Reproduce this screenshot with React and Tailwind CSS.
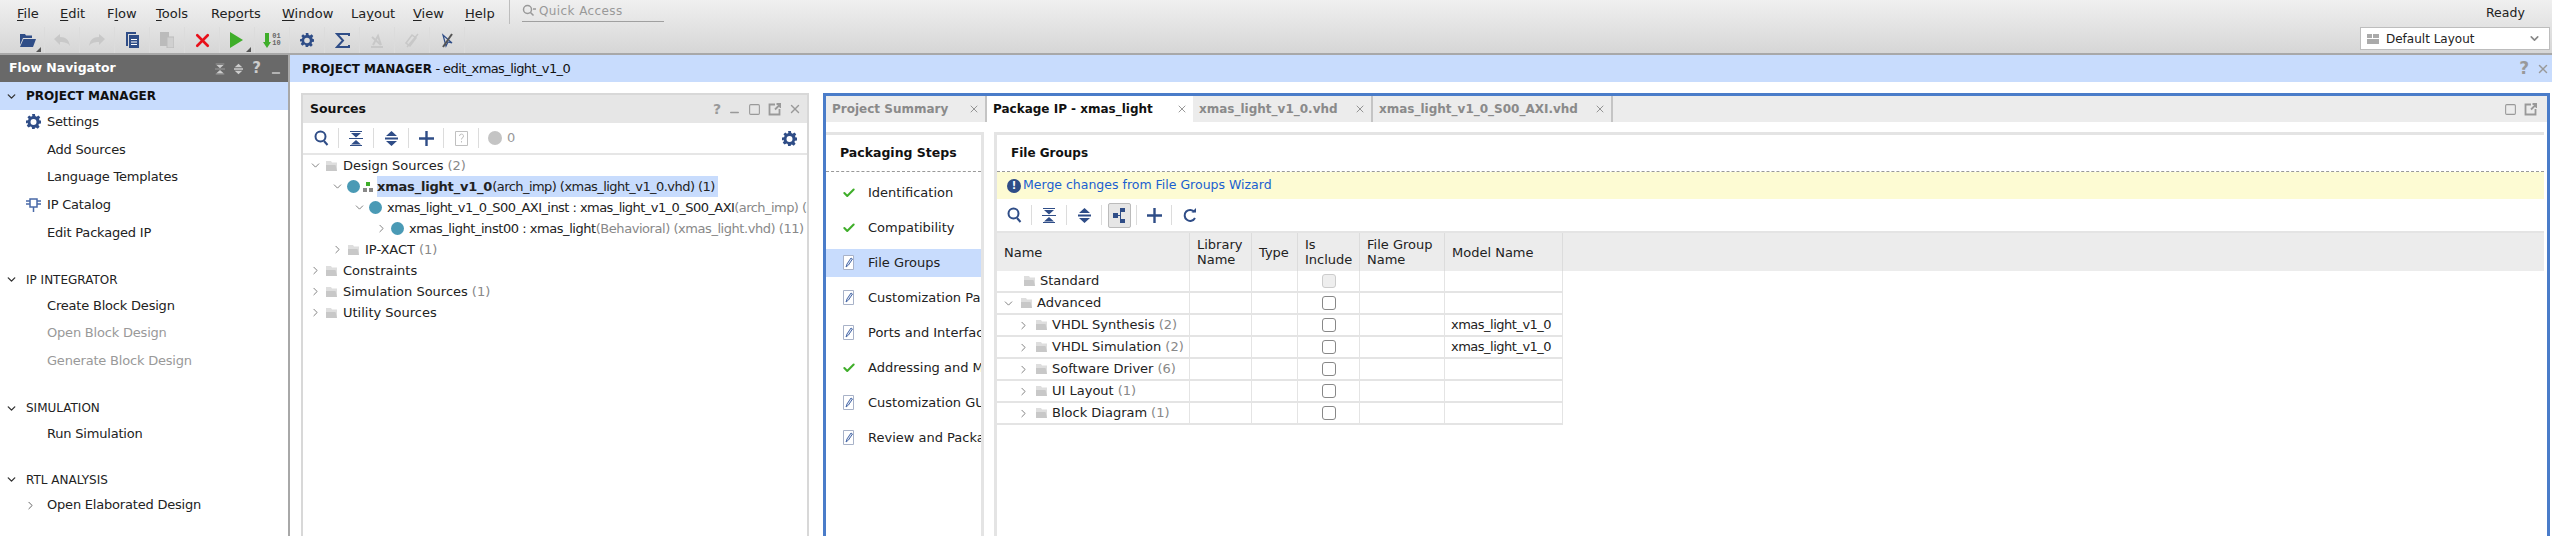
import { ChevronDown, ChevronRight, Check, X, Minus, Square } from "lucide-react";

const blue = "#2f4d87";

const Folder = () => (
  <svg width="13" height="12" viewBox="0 0 13 12" className="shrink-0">
    <path d="M1 1h5l1 1.500h5v8.500H1z" fill="#dedede" />
    <path d="M1 5h9.500l1.500 6H1z" fill="#c8c8c8" />
  </svg>
);

const Dot = () => <span className="w-[13px] h-[13px] rounded-full bg-[#4a9ab5] shrink-0" />;

const Chev = ({ open }) =>
  open ? (
    <ChevronDown size={13} strokeWidth={1.5} className="shrink-0 text-[#666]" />
  ) : (
    <ChevronRight size={13} strokeWidth={1.5} className="shrink-0 text-[#666]" />
  );

const Gear = ({ size = 15, color = blue }) => (
  <svg width={size} height={size} viewBox="0 0 16 16">
    <path
      fillRule="evenodd"
      fill={color}
      d="M6.500 0h3l.4 2.200 1.500.6L13.200 1.500l2 2-1.300 1.800.6 1.500L16 7v3l-2.200.4-.6 1.400 1.300 1.900-2 2-1.900-1.300-1.400.6L9.500 16h-3l-.4-2.200-1.400-.6-1.900 1.300-2-2 1.300-1.900-.6-1.400L0 10V7l2.200-.4.6-1.500L1.500 3.500l2-2 1.800 1.300 1.500-.6zM8 5.300a3.200 3.200 0 1 0 0 6.400 3.200 3.200 0 0 0 0-6.400z"
    />
  </svg>
);

const Search = () => (
  <svg width="15" height="16" viewBox="0 0 15 16" fill="none" stroke={blue} strokeWidth="2">
    <circle cx="6.500" cy="6.500" r="5" />
    <path d="M10 11l3.500 4" />
  </svg>
);
const Collapse = () => (
  <svg width="14" height="15" viewBox="0 0 14 15" fill={blue}>
    <path d="M1 0h12v1H1zM2 2h10L7 6.500zM0 7h14v1H0zM7 9l5 4.500H2zM1 14h12v1H1z" />
  </svg>
);
const Expand = () => (
  <svg width="13" height="15" viewBox="0 0 13 15" fill={blue}>
    <path d="M6.500 0L12 5H1zM0 6.500h13v2H0zM1 10h11l-5.500 5z" />
  </svg>
);
const Plus = () => (
  <svg width="15" height="15" viewBox="0 0 15 15" fill={blue}>
    <path d="M6.300 0h2.400v6.300H15v2.400H8.700V15H6.300V8.700H0V6.300h6.300z" />
  </svg>
);
const Refresh = () => (
  <svg width="14" height="15" viewBox="0 0 14 15" fill="none" stroke={blue} strokeWidth="2">
    <path d="M11.500 4A5.500 5.500 0 1 0 12 10" />
    <path d="M8.500 4.500h4.500V0" fill={blue} stroke="none" />
  </svg>
);
const Hier = () => (
  <svg width="13" height="15" viewBox="0 0 13 15" fill={blue}>
    <path d="M7 0h5v4H7zM7 11h5v4H7zM0 5h5v5H0zM5 7h2V2h1v11H7V8H5z" />
  </svg>
);
const WinIcons = () => (
  <div className="flex items-center gap-[7px]">
    <Square size={13} strokeWidth={2} className="text-[#999]" />
    <svg width="13" height="13" viewBox="0 0 13 13" fill="none" stroke="#999" strokeWidth="1.800">
      <path d="M7 1.500H1.500v10h10V6M7 6.500l5-5M8.500 1h4v4" />
    </svg>
  </div>
);
const Pencil = () => (
  <svg width="13" height="17" viewBox="0 0 13 17" fill="none" className="shrink-0">
    <path d="M1.500 1.500h10v14h-10z" stroke="#a8b2c8" fill="#fff" />
    <path d="M4 13l1-3 4-6 1.500 1-4 6z" stroke="#4a6aa8" fill="#dfe6f4" />
  </svg>
);

const menus = [
  ["", "F", "ile", "w-[43px]"],
  ["", "E", "dit", "w-[47px]"],
  ["F", "l", "ow", "w-[49px]"],
  ["", "T", "ools", "w-[55px]"],
  ["Rep", "o", "rts", "w-[71px]"],
  ["", "W", "indow", "w-[69px]"],
  ["La", "y", "out", "w-[62px]"],
  ["", "V", "iew", "w-[52px]"],
  ["", "H", "elp", "w-[44px]"],
];

const Menu = ({ item }) => (
  <span className={`${item[3]} shrink-0`}>
    {item[0]}
    <span className="underline underline-offset-2">{item[1]}</span>
    {item[2]}
  </span>
);

const ToolCell = ({ children, more }) => (
  <div className="relative w-[35px] h-[26px] shrink-0 flex items-center justify-center border-r border-[#dcdcdc]">
    {children}
    {more && (
      <svg width="5" height="5" viewBox="0 0 5 5" className="absolute right-[3px] bottom-[1px]">
        <path d="M5 0v5H0z" fill="#555" />
      </svg>
    )}
  </div>
);

const TopBar = () => (
  <header className="h-[55px] shrink-0 border-b-2 border-[#a8a8a8] bg-gradient-to-b from-[#f0f0f0] to-[#d6d6d6] flex">
    <div className="flex-1 flex flex-col">
      <div className="h-[27px] pl-[17px] flex items-center text-[#222]">
        {menus.map((m) => (
          <Menu key={m[1] + m[2]} item={m} />
        ))}
        <span className="w-px h-[24px] bg-[#bdbdbd] mt-[-4px]" />
        <div className="ml-[12px] w-[142px] h-[22px] mt-[-5px] border-b border-[#a0a0a0] flex items-center gap-[3px] text-[#999] text-[12px] tracking-[0.4px]">
          <svg width="14" height="13" viewBox="0 0 14 13" fill="none" stroke="#999" strokeWidth="1.500">
            <circle cx="5.500" cy="5.500" r="4" />
            <path d="M8.500 8.500l3 3M11 5h3" />
          </svg>
          Quick Access
        </div>
      </div>
      <div className="h-[26px] pl-[10px] flex items-center">
        <ToolCell more>
          <svg width="17" height="16" viewBox="0 0 17 16">
            <path d="M1 2h5l1 1.500h6V6H4L1 13z" fill={blue} />
            <path d="M4.500 7H17l-3 8H1z" fill={blue} />
          </svg>
        </ToolCell>
        <ToolCell>
          <svg width="16" height="12" viewBox="0 0 16 12" fill="#c8c8c8">
            <path d="M0 5l6-5v3c6 0 9 3 10 9-2-3-5-4-10-4v3z" />
          </svg>
        </ToolCell>
        <ToolCell>
          <svg width="16" height="12" viewBox="0 0 16 12" fill="#c8c8c8">
            <path d="M16 5l-6-5v3C4 3 1 6 0 12c2-3 5-4 10-4v3z" />
          </svg>
        </ToolCell>
        <ToolCell>
          <svg width="13" height="16" viewBox="0 0 13 16">
            <path d="M0 0h10v2H2v12H0z" fill={blue} />
            <path d="M3 3h10v13H3z" fill={blue} />
            <path d="M5 7h6v1H5zM5 9.500h6v1H5zM5 12h6v1H5z" fill="#fff" />
          </svg>
        </ToolCell>
        <ToolCell>
          <svg width="14" height="16" viewBox="0 0 14 16">
            <path d="M0 0h9v14H0z" fill="#bbb" />
            <path d="M7 5h7v11H7z" fill="#d0d0d0" stroke="#bbb" />
          </svg>
        </ToolCell>
        <ToolCell>
          <X size={21} strokeWidth={3} className="text-[#e8101a]" />
        </ToolCell>
        <ToolCell more>
          <svg width="14" height="16" viewBox="0 0 14 16" fill="#3fae2a">
            <path d="M0 0l13 8-13 8z" />
          </svg>
        </ToolCell>
        <ToolCell>
          <div className="flex items-center gap-[1px]">
            <svg width="8" height="15" viewBox="0 0 8 15" fill="#3fae2a">
              <path d="M2 0h4v9h2l-4 6-4-6h2z" />
            </svg>
            <span className="text-[7px] leading-[7px] font-bold text-[#666] font-['Liberation_Mono',monospace]">
              01
              <br />
              10
            </span>
          </div>
        </ToolCell>
        <ToolCell>
          <Gear size={14} />
        </ToolCell>
        <ToolCell>
          <svg width="15" height="15" viewBox="0 0 15 15" fill="none" stroke={blue} strokeWidth="2">
            <path d="M14 3V1H2l6 6.500L2 14h12v-2" />
          </svg>
        </ToolCell>
        <ToolCell>
          <svg width="14" height="15" viewBox="0 0 14 15" fill="none" stroke="#c8c8c8" strokeWidth="2">
            <path d="M1 14h12M3 12l5-9 3 9M2 4l9 8" />
          </svg>
        </ToolCell>
        <ToolCell>
          <svg width="14" height="15" viewBox="0 0 14 15" fill="none" stroke="#c8c8c8" strokeWidth="1.500">
            <path d="M1 10l6-8 4 3-6 8zM13 1L2 14" />
          </svg>
        </ToolCell>
        <ToolCell>
          <svg width="14" height="15" viewBox="0 0 14 15" fill="none">
            <path d="M3 2l3 11 2-4 4 1z" stroke={blue} strokeWidth="1.200" />
            <path d="M12 1L3 14" stroke="#555" strokeWidth="2" />
          </svg>
        </ToolCell>
      </div>
    </div>
    <div className="w-[192px] pr-[2px] flex flex-col">
      <div className="h-[27px] pl-[126px] flex items-center text-[#222] text-[12.5px]">Ready</div>
      <div className="h-[23px] bg-white border border-[#bdbdbd] pl-[6px] pr-[8px] flex items-center gap-[7px] text-[#222] text-[12px]">
        <svg width="12" height="10" viewBox="0 0 12 10" fill="#aaa">
          <path d="M0 0h5v4H0zM6 0h6v4H6zM0 5h12v5H0z" />
        </svg>
        <span className="flex-1">Default Layout</span>
        <ChevronDown size={13} strokeWidth={3} className="text-[#888]" />
      </div>
    </div>
  </header>
);

const NavItem = ({ children, disabled, icon, className = "" }) => (
  <div className={`h-[27.7px] flex items-center tracking-[-0.2px] ${disabled ? "text-[#999]" : "text-[#222]"} ${className}`}>
    <span className="w-[47px] pl-[26px] flex shrink-0">{icon}</span>
    {children}
  </div>
);

const NavSection = ({ title, className = "" }) => (
  <div className={`h-[23px] flex items-center text-[12px] text-[#222] ${className}`}>
    <span className="w-[26px] pl-[5px] shrink-0">
      <ChevronDown size={13} strokeWidth={2.500} className="text-[#333]" />
    </span>
    {title}
  </div>
);

const FlowNav = () => (
  <aside className="w-[290px] shrink-0 border-r-2 border-[#a8a8a8] flex flex-col">
    <div className="h-[27px] shrink-0 bg-[#696969] pl-[9px] pr-[6px] flex items-center text-white font-bold text-[12.5px]">
      <span className="flex-1">Flow Navigator</span>
      <div className="flex items-center gap-[9px] text-[#ccc]">
        <svg width="10" height="12" viewBox="0 0 14 15" fill="#ccc">
          <path d="M1 0h12v1H1zM2 2h10L7 6.500zM0 7h14v1H0zM7 9l5 4.500H2zM1 14h12v1H1z" />
        </svg>
        <svg width="9" height="12" viewBox="0 0 13 15" fill="#ccc">
          <path d="M6.500 0L12 5H1zM0 6.500h13v2H0zM1 10h11l-5.500 5z" />
        </svg>
        <span className="text-[15px] leading-none">?</span>
        <Minus size={12} strokeWidth={3} className="mt-[8px]" />
      </div>
    </div>
    <div className="h-[28px] shrink-0 bg-[#c8dcfd] flex items-center font-bold text-[#111] text-[12px]">
      <span className="w-[26px] pl-[5px]">
        <ChevronDown size={13} strokeWidth={2.500} className="text-[#333]" />
      </span>
      PROJECT MANAGER
    </div>
    <NavItem className="mt-[-2px]" icon={<Gear size={15} />}>Settings</NavItem>
    <NavItem>Add Sources</NavItem>
    <NavItem>Language Templates</NavItem>
    <NavItem
      icon={
        <svg width="15" height="15" viewBox="0 0 15 15" fill="none" stroke="#4a6aa8" strokeWidth="1.500">
          <path d="M4 2h7v8H4zM0 4h4M0 7h4M11 4h4M11 7h4M7.500 10v5" />
        </svg>
      }
    >
      IP Catalog
    </NavItem>
    <NavItem>Edit Packaged IP</NavItem>
    <NavSection title="IP INTEGRATOR" className="mt-[22px]" />
    <NavItem>Create Block Design</NavItem>
    <NavItem disabled>Open Block Design</NavItem>
    <NavItem disabled>Generate Block Design</NavItem>
    <NavSection title="SIMULATION" className="mt-[22px]" />
    <NavItem>Run Simulation</NavItem>
    <NavSection title="RTL ANALYSIS" className="mt-[21px]" />
    <NavItem icon={<ChevronRight size={13} strokeWidth={1.5} className="ml-[-2px] text-[#444]" />}>
      Open Elaborated Design
    </NavItem>
  </aside>
);

const Count = ({ children }) => <span className="ml-[4px] text-[#888]">{children}</span>;

const SourcesRow = ({ pad, open, children, icon }) => (
  <div className={`h-[21px] flex items-center whitespace-nowrap ${pad}`}>
    <Chev open={open} />
    <span className="w-[3px] shrink-0" />
    {icon}
    {children}
  </div>
);

const PanelBtn = ({ children, last }) => (
  <div className={`w-[35px] h-[20px] flex items-center justify-center shrink-0 ${last ? "" : "border-r border-[#dcdcdc]"}`}>{children}</div>
);

const Sources = () => (
  <section className="w-[508px] shrink-0 border-2 border-[#d8d8d8] border-b-0 flex flex-col overflow-hidden">
    <div className="h-[28px] shrink-0 bg-[#e6e6e6] pl-[7px] pr-[5px] flex items-center font-bold text-[#111] text-[12.5px]">
      <span className="flex-1">Sources</span>
      <div className="flex items-center gap-[7px] text-[#999]">
        <span className="font-bold text-[14px] leading-none">?</span>
        <Minus size={13} strokeWidth={2.500} className="mt-[6px]" />
        <WinIcons />
        <X size={14} strokeWidth={2.500} />
      </div>
    </div>
    <div className="h-[32px] shrink-0 border-b-2 border-[#e6e6e6] pl-[1px] pr-[10px] flex items-center">
      <PanelBtn>
        <Search />
      </PanelBtn>
      <PanelBtn>
        <Collapse />
      </PanelBtn>
      <PanelBtn>
        <Expand />
      </PanelBtn>
      <PanelBtn>
        <Plus />
      </PanelBtn>
      <PanelBtn>
        <svg width="13" height="15" viewBox="0 0 13 15" fill="none" stroke="#c0c0c0">
          <path d="M.5.500h12v14H.5z" />
          <path d="M4.500 5a2 2 0 1 1 2.500 2l-.5 1.500M6.500 10v1.500" />
        </svg>
      </PanelBtn>
      <div className="flex-1 flex items-center gap-[5px] text-[#999] pl-[9px]">
        <span className="w-[14px] h-[14px] rounded-full bg-[#c4c4c4]" />0
      </div>
      <Gear size={15} />
    </div>
    <div className="pl-[6px] overflow-hidden text-[#222]">
      <SourcesRow pad="pl-[0px]" open icon={<span className="mr-[5px]"><Folder /></span>}>
        Design Sources<Count>(2)</Count>
      </SourcesRow>
      <SourcesRow
        pad="pl-[22px]"
        open
        icon={
          <span className="flex items-center gap-[3px] mr-[4px]">
            <Dot />
            <svg width="10" height="10" viewBox="0 0 10 10">
              <path d="M3 0h4v4H3z" fill="#3fae2a" />
              <path d="M0 6h4v4H0zM6 6h4v4H6z" fill="#888" />
            </svg>
          </span>
        }
      >
        <span className="bg-[#c8dcfd] h-[21px] leading-[21px] pr-[3px]">
          <b className="tracking-[-0.2px]">xmas_light_v1_0</b>
          <span className="tracking-[-0.55px]">(arch_imp) (xmas_light_v1_0.vhd) (1)</span>
        </span>
      </SourcesRow>
      <SourcesRow pad="pl-[44px]" open icon={<span className="mr-[5px] flex"><Dot /></span>}>
        <span className="tracking-[-0.55px]">
          xmas_light_v1_0_S00_AXI_inst : xmas_light_v1_0_S00_AXI
          <span className="text-[#888]">(arch_imp) (xmas_light_v1_0_S00_AXI.vhd) (1)</span>
        </span>
      </SourcesRow>
      <SourcesRow pad="pl-[66px]" icon={<span className="mr-[5px] flex"><Dot /></span>}>
        <span className="tracking-[-0.45px]">
          xmas_light_inst00 : xmas_light
          <span className="text-[#888]">(Behavioral) (xmas_light.vhd) (11)</span>
        </span>
      </SourcesRow>
      <SourcesRow pad="pl-[22px]" icon={<span className="mr-[5px]"><Folder /></span>}>
        IP-XACT<Count>(1)</Count>
      </SourcesRow>
      <SourcesRow pad="pl-[0px]" icon={<span className="mr-[5px]"><Folder /></span>}>Constraints</SourcesRow>
      <SourcesRow pad="pl-[0px]" icon={<span className="mr-[5px]"><Folder /></span>}>
        Simulation Sources<Count>(1)</Count>
      </SourcesRow>
      <SourcesRow pad="pl-[0px]" icon={<span className="mr-[5px]"><Folder /></span>}>Utility Sources</SourcesRow>
    </div>
  </section>
);

const tabs = [
  ["Project Summary", "w-[161px]"],
  ["Package IP - xmas_light", "w-[206px]", true],
  ["xmas_light_v1_0.vhd", "w-[180px]"],
  ["xmas_light_v1_0_S00_AXI.vhd", "w-[240px]"],
];

const TabBar = () => (
  <div className="h-[26px] shrink-0 bg-[#ececec] flex items-stretch pr-[10px] text-[12px]">
    {tabs.map(([label, width, active]) => (
      <div
        key={label}
        className={`${width} shrink-0 flex items-center pl-[6px] pr-[5px] whitespace-nowrap font-bold ${
          active ? "bg-white text-[#111]" : "text-[#8a8a8a] border-r-2 border-[#c4c4c4]"
        }`}
      >
        <span className="flex-1">{label}</span>
        <X size={12} strokeWidth={1.500} className="text-[#777]" />
      </div>
    ))}
    <span className="flex-1" />
    <WinIcons />
  </div>
);

const steps = [
  ["Identification", "check"],
  ["Compatibility", "check"],
  ["File Groups", "edit", true],
  ["Customization Parameters", "edit"],
  ["Ports and Interfaces", "edit"],
  ["Addressing and Memory", "check"],
  ["Customization GUI", "edit"],
  ["Review and Package", "edit"],
];

const Steps = () => (
  <div className="w-[158px] shrink-0 border-t-[3px] border-r-[3px] border-[#e4e4e4] flex flex-col overflow-hidden">
    <div className="h-[37px] shrink-0 pl-[14px] flex items-center font-bold text-[#111] text-[12.5px] border-b border-dashed border-[#999]">
      Packaging Steps
    </div>
    <div className="pt-[3px]">
      {steps.map(([label, kind, active]) => (
        <div key={label} className="h-[35px] flex items-center">
          <div className={`h-[28px] w-full flex items-center whitespace-nowrap text-[#222] ${active ? "bg-[#c8dcfd]" : ""}`}>
            <span className="w-[42px] shrink-0 pl-[16px] flex">
              {kind === "check" ? <Check size={14} strokeWidth={3.500} className="text-[#3fae2a]" /> : <Pencil />}
            </span>
            {label}
          </div>
        </div>
      ))}
    </div>
  </div>
);

const cols = ["w-[193px]", "w-[62px]", "w-[46px]", "w-[62px]", "w-[85px]", "w-[118px]"];

const HeadCell = ({ w, children }) => (
  <div className={`${w} shrink-0 h-full border-r border-[#dcdcdc] px-[7px] flex items-center leading-[15px] text-[#222]`}>
    <span>{children}</span>
  </div>
);

const groups = [
  { name: "Standard", pad: "pl-[21px]", disabled: true },
  { name: "Advanced", pad: "pl-[5px]", open: true },
  { name: "VHDL Synthesis", count: 2, pad: "pl-[20px]", child: true, model: "xmas_light_v1_0" },
  { name: "VHDL Simulation", count: 2, pad: "pl-[20px]", child: true, model: "xmas_light_v1_0" },
  { name: "Software Driver", count: 6, pad: "pl-[20px]", child: true },
  { name: "UI Layout", count: 1, pad: "pl-[20px]", child: true },
  { name: "Block Diagram", count: 1, pad: "pl-[20px]", child: true },
];

const GroupRow = ({ g }) => (
  <div className="h-[22px] w-[566px] flex border-b-2 border-[#e4e4e4] text-[#222]">
    <div className={`${cols[0]} shrink-0 border-r border-[#e4e4e4] flex items-center whitespace-nowrap ${g.pad}`}>
      {g.disabled ? null : <Chev open={g.open} />}
      <span className="w-[5px] shrink-0" />
      <Folder />
      <span className="w-[4px] shrink-0" />
      {g.name}
      {g.count ? <Count>({g.count})</Count> : null}
    </div>
    <div className={`${cols[1]} shrink-0 border-r border-[#e4e4e4]`} />
    <div className={`${cols[2]} shrink-0 border-r border-[#e4e4e4]`} />
    <div className={`${cols[3]} shrink-0 border-r border-[#e4e4e4] flex items-center justify-center`}>
      <span className={`w-[14px] h-[14px] rounded-[3px] border ${g.disabled ? "border-[#ccc] bg-[#eee]" : "border-[#888] bg-white"}`} />
    </div>
    <div className={`${cols[4]} shrink-0 border-r border-[#e4e4e4]`} />
    <div className={`${cols[5]} shrink-0 border-r border-[#e4e4e4] flex items-center pl-[6px] tracking-[-0.5px]`}>{g.model}</div>
  </div>
);

const FileGroups = () => (
  <div className="flex-1 min-w-0 ml-[10px] mr-[3px] border-t-[3px] border-l-[3px] border-[#e4e4e4] flex flex-col overflow-hidden">
    <div className="h-[37px] shrink-0 pl-[14px] flex items-center font-bold text-[#111] text-[12px] border-b border-dashed border-[#999]">
      File Groups
    </div>
    <div className="h-[27px] shrink-0 bg-[#fdfbd3] pl-[10px] flex items-center gap-[2px] text-[#1a5fd0] text-[12.5px]">
      <span className="w-[14px] h-[14px] rounded-full bg-[#2f4d87] text-white text-[10px] font-bold flex items-center justify-center">!</span>
      Merge changes from File Groups Wizard
    </div>
    <div className="h-[34px] shrink-0 border-b-[2px] border-[#e4e4e4] flex items-center">
      <PanelBtn>
        <Search />
      </PanelBtn>
      <PanelBtn>
        <Collapse />
      </PanelBtn>
      <PanelBtn>
        <Expand />
      </PanelBtn>
      <PanelBtn>
        <span className="w-[23px] h-[25px] bg-[#e6e6e6] border border-[#bbb] rounded-[2px] flex items-center justify-center">
          <Hier />
        </span>
      </PanelBtn>
      <PanelBtn>
        <Plus />
      </PanelBtn>
      <PanelBtn last>
        <Refresh />
      </PanelBtn>
    </div>
    <div className="h-[38px] shrink-0 bg-[#ececec] flex">
      <HeadCell w={cols[0]}>Name</HeadCell>
      <HeadCell w={cols[1]}>
        Library
        <br />
        Name
      </HeadCell>
      <HeadCell w={cols[2]}>Type</HeadCell>
      <HeadCell w={cols[3]}>
        Is
        <br />
        Include
      </HeadCell>
      <HeadCell w={cols[4]}>
        File Group
        <br />
        Name
      </HeadCell>
      <HeadCell w={cols[5]}>Model Name</HeadCell>
    </div>
    {groups.map((g) => (
      <GroupRow key={g.name} g={g} />
    ))}
  </div>
);

const Editor = () => (
  <section className="flex-1 min-w-0 ml-[14px] mr-[2px] border-[3px] border-b-0 border-[#4a7cc9] flex flex-col overflow-hidden">
    <TabBar />
    <div className="flex-1 min-h-0 pt-[10px] flex">
      <Steps />
      <FileGroups />
    </div>
  </section>
);

export default function App() {
  return (
    <div className="w-[2552px] h-[536px] overflow-hidden bg-white flex flex-col font-['DejaVu_Sans',sans-serif] text-[13px]">
      <TopBar />
      <div className="flex-1 min-h-0 flex">
        <FlowNav />
        <main className="flex-1 min-w-0 flex flex-col">
          <div className="h-[27px] shrink-0 bg-[#c8dcfd] pl-[12px] pr-[2px] flex items-center text-[#111]">
            <span className="flex-1 tracking-[-0.6px]">
              <b className="text-[12px] tracking-normal">PROJECT MANAGER</b> - edit_xmas_light_v1_0
            </span>
            <span className="text-[#999] font-bold text-[17px] leading-none mr-[7px]">?</span>
            <X size={14} strokeWidth={2.500} className="text-[#999]" />
          </div>
          <div className="flex-1 min-h-0 pt-[11px] pl-[11px] flex">
            <Sources />
            <Editor />
          </div>
        </main>
      </div>
    </div>
  );
}
